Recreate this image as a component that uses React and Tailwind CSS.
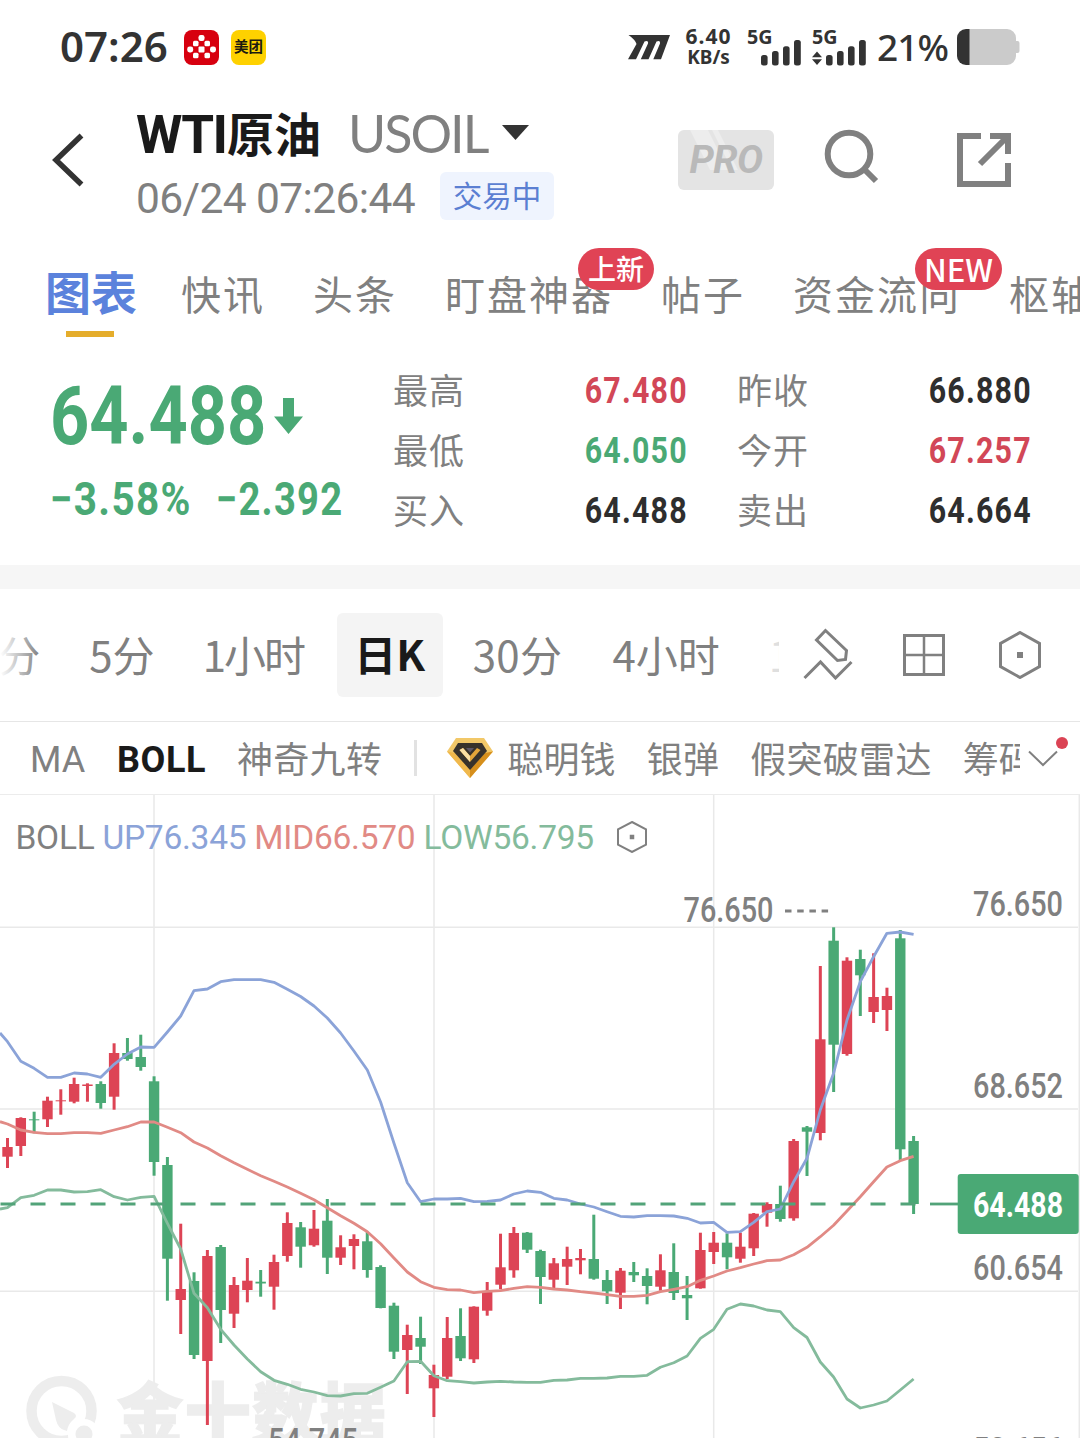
import React from "react";

const RED = "#dd4455";
const GREEN = "#4aa975";

const tabs = [
  { label: "快讯" },
  { label: "头条" },
  { label: "盯盘神器", badge: "上新" },
  { label: "帖子" },
  { label: "资金流向", badge: "NEW" },
  { label: "枢轴点" },
];

const quotes = [
  { label: "最高", value: "67.480", color: "text-[#d24757]" },
  { label: "昨收", value: "66.880", color: "text-[#2e2e2e]" },
  { label: "最低", value: "64.050", color: "text-[#4aa975]" },
  { label: "今开", value: "67.257", color: "text-[#d24757]" },
  { label: "买入", value: "64.488", color: "text-[#2e2e2e]" },
  { label: "卖出", value: "64.664", color: "text-[#2e2e2e]" },
];

const periods = [
  { label: "1分" },
  { label: "5分", className: "ml-px" },
  { label: "1小时", className: "w-[105px] tracking-[-2px]" },
  { label: "日K", active: true },
  { label: "30分", className: "ml-px tracking-[0.4px]" },
  { label: "4小时", className: "ml-[2px]" },
  { label: "15分", className: "ml-px" },
];

// [rising, high, body top, body bottom, low]
const candles = [
  [1, 1138, 1147, 1156.7, 1168],
  [1, 1117.3, 1118, 1146, 1156],
  [0, 1111.7, 1119.3, 1120, 1133.3],
  [1, 1096.7, 1100.7, 1119.3, 1127],
  [1, 1089.3, 1100.3, 1101.3, 1114.7],
  [1, 1077.7, 1084, 1101.7, 1103.3],
  [1, 1083.3, 1084.5, 1086, 1101.7],
  [0, 1081.3, 1084, 1103, 1108.7],
  [1, 1043.3, 1053, 1096.7, 1109.7],
  [0, 1038, 1053, 1059, 1060.7],
  [0, 1034.7, 1057, 1067, 1070.7],
  [0, 1076.3, 1081.3, 1162, 1175.7],
  [0, 1157, 1165, 1258.7, 1300.7],
  [1, 1223.7, 1289, 1300, 1334],
  [0, 1272.3, 1281, 1355, 1359],
  [1, 1250, 1256, 1361, 1425],
  [0, 1245, 1247, 1310, 1343],
  [1, 1277, 1285, 1313.7, 1328],
  [1, 1258, 1280.7, 1290, 1302.3],
  [0, 1270, 1281.7, 1283.5, 1296.7],
  [1, 1254.7, 1262, 1286.7, 1309.7],
  [1, 1212.3, 1223, 1256, 1261.7],
  [0, 1222, 1227.3, 1246.7, 1267.7],
  [1, 1210, 1228.7, 1245.3, 1246.7],
  [0, 1199, 1220.7, 1257.7, 1274],
  [1, 1235.3, 1247.3, 1257.7, 1265],
  [1, 1234.3, 1239, 1246, 1269.3],
  [0, 1231.7, 1241.3, 1270, 1277.7],
  [0, 1265.3, 1267, 1308, 1308.3],
  [0, 1302.7, 1305.7, 1351.7, 1359],
  [1, 1324.7, 1335, 1350, 1394],
  [0, 1316.7, 1338, 1346.7, 1364],
  [1, 1364.7, 1375, 1388.3, 1417],
  [1, 1317, 1338, 1376.7, 1379],
  [0, 1308.3, 1336, 1358.3, 1361],
  [1, 1306.3, 1306.7, 1359.3, 1363],
  [1, 1282, 1291, 1310.7, 1315.7],
  [1, 1233.7, 1267.3, 1284.7, 1289.3],
  [1, 1227, 1233, 1270.3, 1277.7],
  [0, 1232, 1232.7, 1249.7, 1253],
  [0, 1249.7, 1251, 1277, 1304],
  [1, 1258, 1263.3, 1279.7, 1288.7],
  [1, 1246.7, 1259, 1266.7, 1285],
  [1, 1249, 1258, 1260.3, 1274.3],
  [0, 1214.7, 1259, 1278.7, 1279.7],
  [0, 1270, 1280, 1291.3, 1304],
  [1, 1268, 1270.7, 1292.7, 1309],
  [0, 1262, 1272, 1275.3, 1282],
  [0, 1268.3, 1276, 1286, 1304.3],
  [1, 1254.3, 1270.3, 1286.7, 1290.7],
  [0, 1243.3, 1272, 1293, 1300],
  [0, 1276, 1295, 1298.3, 1320],
  [1, 1232.7, 1250, 1288.3, 1288.7],
  [1, 1232, 1242.7, 1252, 1264],
  [0, 1233.3, 1242.7, 1257.3, 1269.3],
  [1, 1232.7, 1246.7, 1258.7, 1262.7],
  [1, 1213, 1213.7, 1248.3, 1256],
  [1, 1202.3, 1204, 1212.7, 1226.7],
  [0, 1185.7, 1204, 1219, 1221.7],
  [1, 1139, 1141, 1218.3, 1220.7],
  [0, 1126, 1127.3, 1131.7, 1176],
  [1, 966, 1039.3, 1133, 1140.3],
  [0, 927.3, 940.7, 1044.7, 1092],
  [1, 957.3, 960.7, 1054, 1055.7],
  [0, 949.7, 959, 975.3, 1016],
  [1, 953.3, 997, 1012, 1023],
  [1, 987.7, 996, 1010, 1031],
  [0, 930, 938.3, 1149.3, 1160.7],
  [0, 1136, 1141, 1204, 1214],
];

// Bollinger bands, one value per candle; the first is the left edge
const upper = [
  1033, 1041.7, 1061.3, 1068.3, 1077.3, 1077.3, 1073, 1074, 1077.3, 1064.3, 1054, 1047, 1047.3, 1032, 1016,
  990.7, 989, 981.7, 979.7, 979.7, 979.7, 982.3, 989.3, 996.5, 1006, 1018, 1033, 1051, 1070, 1102, 1143,
  1182.7, 1201.7, 1199, 1199, 1198.3, 1201.7, 1201.3, 1200, 1194, 1191, 1192.3, 1198.3, 1200, 1204, 1207,
  1211.7, 1216.3, 1217, 1215.7, 1215.7, 1216, 1218.3, 1223, 1222.3, 1232.3, 1231.7, 1222.3, 1211.7, 1209,
  1181.7, 1158.3, 1110, 1073.3, 1020, 981.7, 956.7, 933.3, 932, 934.3,
];
const middle = [
  1121.7, 1124, 1130, 1132.3, 1133.7, 1133.7, 1132.7, 1132.7, 1133.3, 1130, 1126.7, 1122, 1122, 1127.3, 1132.7,
  1142, 1148, 1155.7, 1162.7, 1169.3, 1175.7, 1181.3, 1187, 1193.3, 1199.7, 1207.7, 1215.7, 1223.3, 1231.7,
  1243.7, 1258, 1272, 1281.7, 1287.3, 1289.7, 1290, 1292.7, 1291.3, 1290.7, 1288.3, 1286.7, 1287.3, 1289, 1290,
  1291.7, 1293, 1294.7, 1296.3, 1296.3, 1295.3, 1291.7, 1289.3, 1286.7, 1280.3, 1276, 1271, 1267.7, 1264,
  1260.7, 1260, 1254.7, 1247.3, 1236.7, 1225.3, 1211, 1196.7, 1181.7, 1167, 1160.7, 1156.3,
];
const lower = [
  1209, 1207.7, 1197.7, 1195.3, 1190, 1190, 1192, 1191.7, 1189.7, 1196.7, 1200, 1197.3, 1196.3, 1223.3, 1249,
  1293.3, 1307.7, 1329.3, 1345, 1359, 1371.7, 1380.3, 1384.3, 1389.3, 1392, 1395.7, 1396, 1393.7, 1393.3,
  1387.3, 1381, 1361.7, 1361.3, 1375.7, 1380.7, 1381.7, 1383, 1382, 1381.3, 1382, 1382.3, 1382.3, 1380.3, 1380,
  1378.3, 1378.3, 1378, 1376.3, 1376.3, 1375.3, 1367.3, 1362.7, 1356, 1338.3, 1329.3, 1309.3, 1304, 1306,
  1310, 1311.7, 1327.7, 1337.5, 1362, 1377, 1399, 1408, 1405, 1401, 1390, 1379,
];

const candleX = (i) => 7.5 + i * 13.325;
const bandPoints = (values) =>
  values.map((y, i) => `${i === 0 ? 0 : candleX(i - 1).toFixed(1)},${y}`).join(" ");

const SignalBars = ({ active }) => (
  <svg width="56" height="44" viewBox="0 -4 56 44" fill="#333">
    <text x="1" y="16.500" fontFamily="Noto Sans" fontWeight="700" fontSize="19" textLength="25.500" lengthAdjust="spacingAndGlyphs">5G</text>
    {active && <path d="M6 24.500l5 5.800H1zM6 38l5-5.800H1z" />}
    <rect x="15" y="28" width="6.600" height="10.500" rx="2.500" />
    <rect x="26" y="24" width="6.600" height="14.500" rx="2.500" />
    <rect x="37" y="19.300" width="6.600" height="19.200" rx="2.500" />
    <rect x="48" y="13" width="6.800" height="25.500" rx="2.500" />
  </svg>
);

const StatusBar = () => (
  <div className="h-[94px] shrink-0 flex items-center pl-[60px] pr-[60px] text-[#333] font-['Noto_Sans']">
    <div className="w-[124px] -mt-[2px] text-[42px] leading-none font-semibold">07:26</div>
    <svg width="35" height="35" viewBox="0 0 35 35">
      <rect width="35" height="35" rx="8" fill="#d7000f" />
      <g fill="#fff">
        <rect x="14.500" y="5" width="6" height="6" rx="2.200" />
        <rect x="9" y="10.800" width="5.500" height="5.500" rx="1.500" />
        <rect x="20.500" y="10.800" width="5.500" height="5.500" rx="1.500" />
        <rect x="3.200" y="16.500" width="6" height="6" rx="2.400" />
        <rect x="14.500" y="16.500" width="6" height="6" rx="1" />
        <rect x="26" y="16.500" width="6" height="6" rx="2.400" />
        <rect x="9" y="22.800" width="5.500" height="5.500" rx="1.500" />
        <rect x="20.500" y="22.800" width="5.500" height="5.500" rx="1.500" />
      </g>
    </svg>
    <div className="ml-3 w-[35px] h-[35px] rounded-lg bg-[#fed100] flex items-center justify-center text-[14.5px] leading-none font-bold text-[#1c1a10] font-['Noto_Sans_CJK_SC',sans-serif]">
      <span className="-mt-[2px]">美团</span>
    </div>

    <div className="ml-auto flex items-center">
      <svg width="42" height="25" viewBox="0 0 42 25" fill="#333">
        <path d="M0.500 0H42L33 24.300H25.300L32 8.500Q32.500 6 30.800 6L28.500 6.500L20.500 24.300H12.800L20 8.500Q20.500 6 18.500 6L16.500 6.500L8 24.300H0L8.500 9Q7 4.500 0.500 0Z" />
      </svg>
      <div className="ml-[13px] w-[51px] text-center text-[21px] leading-[21.5px] font-bold">
        <div className="tracking-[1px]">6.40</div>
        <div className="text-[19px]">KB/s</div>
      </div>
      <div className="ml-[12px] -mt-[4px]"><SignalBars /></div>
      <div className="ml-[9px] -mt-[4px]"><SignalBars active /></div>
      <div className="ml-[10px] -mt-[2px] w-[80px] text-[37px] leading-none font-medium tracking-[-0.9px]">21%</div>
      <svg width="63" height="37" viewBox="0 0 63 37">
        <path d="M10 0H50a9 9 0 0 1 9 9v3h1.500a2 2 0 0 1 2 2v8a2 2 0 0 1-2 2H59v3a9 9 0 0 1-9 9H10z" fill="#cbcbcb" />
        <path d="M12.500 0H9a9 9 0 0 0-9 9v18a9 9 0 0 0 9 9h3.500z" fill="#333" />
      </svg>
    </div>
  </div>
);

const Header = () => (
  <div className="h-[146px] shrink-0 flex items-start">
    <svg className="ml-[50px] mt-[38px]" width="36" height="56" viewBox="0 0 36 56" fill="none" stroke="#333" strokeWidth="5.500">
      <path d="M31.500 3.500L6 28l25.500 24.500" />
    </svg>

    <div className="ml-[50px] mt-[14px] w-[542px]">
      <div className="h-[52px] flex items-center leading-none whitespace-nowrap">
        <span className="w-[91px] mt-[2px] text-[53px] font-bold text-[#1a1a1a] font-['Roboto'] tracking-[-1.5px]">WTI</span>
        <span className="-mt-[5px] w-[121px] text-[47px] font-bold text-[#1a1a1a] font-['Noto_Sans_CJK_SC',sans-serif]">原油</span>
        <span className="-mt-[2px] w-[154px] text-[52px] text-[#808080] font-['Lato'] tracking-[-2px]">USOIL</span>
        <svg className="-mt-1" width="27" height="15" viewBox="0 0 27 15" fill="#333"><path d="M0 0h27L13.500 15z" /></svg>
      </div>
      <div className="mt-[12px] h-[48px] flex items-center leading-none whitespace-nowrap">
        <span className="mt-[6px] w-[304px] text-[42.500px] text-[#808080] font-['Roboto'] tracking-[-0.6px]">06/24 07:26:44</span>
        <span className="w-[114px] h-[48px] pb-[2px] rounded-md bg-[#eff4fe] flex items-center justify-center text-[29.5px] text-[#5b7fd2] font-['Noto_Sans_CJK_SC',sans-serif]">
          交易中
        </span>
      </div>
    </div>

    <div className="relative mt-[36px] w-[96px] h-[60px] rounded-md bg-[#e4e4e4] overflow-hidden flex items-center justify-center">
      <svg className="absolute inset-0" width="96" height="60">
        <path d="M12 0H30L50 40H32zM34 0h6l20 40h-6z" fill="#ededed" />
      </svg>
      <span className="relative text-[39px] leading-none font-bold italic text-[#b9b9b9] font-['Roboto'] tracking-[-0.5px]">PRO</span>
    </div>
    <svg className="ml-[49px] mt-[35px]" width="58" height="58" viewBox="0 0 58 58" fill="none" stroke="#808080" strokeWidth="6">
      <circle cx="26" cy="25" r="21.300" />
      <path d="M40 39L53 52" />
    </svg>
    <svg className="ml-[76px] mt-[39px]" width="54" height="54" viewBox="0 0 54 54" fill="none" stroke="#808080" strokeWidth="6">
      <path d="M24 3H3v48h48V30" />
      <path d="M33 3h18v18M51 3L23 31" />
    </svg>
  </div>
);

const Tabs = () => (
  <div className="h-[110px] shrink-0 flex items-start gap-12 pl-[45px] overflow-hidden whitespace-nowrap font-['Noto_Sans_CJK_SC',sans-serif]">
    <div className="-mr-[3px] shrink-0 flex flex-col items-center">
      <span className="mt-[20px] h-[60px] text-[46px] leading-[60px] font-bold text-[#5b82dc]">图表</span>
      <span className="mt-[11px] -ml-[2px] w-12 h-1.5 bg-[#e5ad2b]" />
    </div>
    {tabs.map((tab) => (
      <div key={tab.label} className="relative mt-[23px] -left-px shrink-0 text-[40px] leading-[60px] tracking-[2px] text-[#808080]">
        {tab.label}
        {tab.badge && (
          <span
            className={`absolute -top-[15px] h-[42px] pb-0.5 rounded-full bg-[#e04355] text-white flex items-center justify-center font-medium tracking-normal leading-none ${
              tab.badge === "NEW" ? "left-[122px] w-[87px] text-[31px]" : "left-[133px] w-[76px] text-[28px]"
            }`}
          >
            {tab.badge}
          </span>
        )}
      </div>
    ))}
  </div>
);

const Quote = () => (
  <div className="h-[215px] shrink-0 flex font-['Roboto'] leading-none whitespace-nowrap">
    <div className="w-[393px] pl-[50px] text-[#4aa975] font-bold">
      <div className="mt-[25px] h-[82px] flex items-center">
        <div className="w-[224px]">
          <span className="inline-block origin-left scale-x-[0.835] text-[82px]">64.488</span>
        </div>
        <svg width="29" height="36" viewBox="0 0 29 36" fill={GREEN}><path d="M9 0h11v18.500h9L14.500 36 0 18.500h9z" /></svg>
      </div>
      <div className="mt-[19px] h-[46px] flex items-center text-[46px]">
        <div className="w-[166px]">
          <span className="inline-block origin-left scale-x-[0.88] tracking-[1.5px]">−3.58%</span>
        </div>
        <div>
          <span className="inline-block origin-left scale-x-[0.83] tracking-[1.5px]">−2.392</span>
        </div>
      </div>
    </div>
    <div className="mt-[10px] h-[180px] grid grid-cols-[294px_294px] gap-x-[50px]">
      {quotes.map((q) => (
        <div key={q.label} className="h-[60px] flex items-center justify-between">
          <span className="-mt-1 text-[35px] tracking-[1px] text-[#808080] font-['Noto_Sans_CJK_SC',sans-serif]">{q.label}</span>
          <span className={`inline-block origin-right scale-x-[0.82] text-[37px] font-bold tracking-[1.500px] -mr-px ${q.color}`}>{q.value}</span>
        </div>
      ))}
    </div>
  </div>
);

const HexIcon = ({ width, height, stroke, dot }) => (
  <svg width={width} height={height} viewBox={`0 0 ${width} ${height}`} fill="none" stroke="#808080" strokeWidth={stroke}>
    <path d={`M${width / 2} ${stroke / 2}L${width - stroke / 2} ${height * 0.26}V${height * 0.74}L${width / 2} ${height - stroke / 2}L${stroke / 2} ${height * 0.74}V${height * 0.26}Z`} />
    <rect x={(width - dot) / 2} y={(height - dot) / 2} width={dot} height={dot} fill="#808080" stroke="none" />
  </svg>
);

const PeriodBar = () => (
  <div className="h-[133px] shrink-0 flex items-center border-b border-[#e6e6e6]">
    <div className="relative w-[779px] overflow-hidden">
      <div className="-ml-[25px] w-[1000px] h-[84px] flex items-center gap-12 text-[42px] leading-none text-[#808080] whitespace-nowrap font-['Noto_Sans_CJK_SC',sans-serif]">
        {periods.map((p) =>
          p.active ? (
            <span key={p.label} className="-mx-[19px] w-[106px] h-[84px] pb-1 rounded-md bg-[#f4f4f4] flex items-center justify-center font-bold text-[#1a1a1a]">
              {p.label}
            </span>
          ) : (
            <span key={p.label} className={`shrink-0 -mt-[3px] ${p.className || ""}`}>{p.label}</span>
          )
        )}
      </div>
      <div className="absolute inset-y-0 left-0 w-10 bg-gradient-to-r from-white to-transparent" />
      <div className="absolute inset-y-0 right-0 w-8 bg-white/75" />
    </div>
    <svg className="ml-[24px] -mt-0.5" width="50" height="52" viewBox="0 0 50 52" fill="none" stroke="#808080" strokeWidth="3">
      <path d="M22.500 2.500L13.500 12 34.500 32.500 42.500 31.500 43.500 22.500Z" />
      <path d="M1.500 50L17.500 34 32.500 50 48.500 34" />
    </svg>
    <svg className="ml-[50px]" width="42" height="42" viewBox="0 0 42 42" fill="none" stroke="#808080">
      <rect x="1.500" y="1.500" width="39" height="39" strokeWidth="3" />
      <path d="M21 1v40M1 21h40" strokeWidth="2.500" />
    </svg>
    <div className="ml-[54px]"><HexIcon width={42} height={48} stroke={3} dot={6} /></div>
  </div>
);

const IndicatorBar = () => (
  <div className="relative h-[73px] shrink-0 flex items-center border-b border-[#ececec] text-[36px] leading-none text-[#808080] whitespace-nowrap overflow-hidden font-['Noto_Sans_CJK_SC',sans-serif]">
    <span className="mt-[4px] ml-[30px] w-[87px] font-['Roboto']">MA</span>
    <span className="mt-[4px] w-[120px] font-['Roboto'] font-bold text-[#1a1a1a] tracking-[0.6px]">BOLL</span>
    <span className="-mt-[3px] tracking-[0.3px]">神奇九转</span>
    <span className="ml-[32px] w-[3px] h-9 bg-[#e2e2e2]" />
    <svg className="ml-[30px] shrink-0" width="46" height="40" viewBox="0 0 46 40">
      <path d="M9 0H37L46 13.500 23 40 0 13.500Z" fill="#f2c868" />
      <path d="M46 13.500L23 40V31L38 15z" fill="#d68f1c" />
      <path d="M0 13.500L23 40V31L8 15z" fill="#f0b84c" />
      <path d="M11 5H35L40 13 23 32 6 13Z" fill="#37322b" />
      <path d="M12.500 12L16 10 23 18 30 10 33.500 12 23 24Z" fill="#e3a53a" />
      <path d="M12.500 12L16 10 23 18V24Z" fill="#f9dfa4" />
      <path d="M19 10h8l-4 4.500z" fill="#5b5566" />
    </svg>
    <span className="-mt-[3px] ml-[14px] tracking-[0.2px]">聪明钱</span>
    <span className="-mt-[3px] ml-[31px] tracking-[0.2px]">银弹</span>
    <span className="-mt-[3px] ml-[31px] tracking-[0.3px]">假突破雷达</span>
    <span className="-mt-[3px] ml-[31px] w-[57px] overflow-hidden py-2">筹码</span>
    <svg className="ml-[8px] shrink-0" width="30" height="17" viewBox="0 0 30 17" fill="none" stroke="#808080" strokeWidth="2">
      <path d="M1 1.500l14 13.500 14-13.500" />
    </svg>
    <span className="absolute left-[1056px] top-[15px] w-3 h-3 rounded-full bg-[#db4354]" />
  </div>
);

const AxisText = ({ x, y, width = 90, fill = "#808080", weight = 500, children }) => (
  <text x={x} y={y} fill={fill} fontFamily="Roboto" fontWeight={weight} fontSize="35" textLength={width} lengthAdjust="spacingAndGlyphs">
    {children}
  </text>
);

const Chart = () => (
  <div className="relative h-[643px] shrink-0 overflow-hidden">
    <svg className="block" width="1080" height="643" viewBox="0 795 1080 643">
      <g stroke="#e9e9e9" strokeWidth="1.500">
        {[154, 434, 713.7, 1079.3].map((x) => (
          <line key={x} x1={x} x2={x} y1="795" y2="1438" />
        ))}
        {[927.3, 1109, 1291.3].map((y) => (
          <line key={y} x1="0" x2="1078" y1={y} y2={y} />
        ))}
      </g>

      {/* watermark */}
      <g fill="#ededed">
        <circle cx="61.500" cy="1411" r="30" fill="none" stroke="#ededed" strokeWidth="10.500" />
        <circle cx="84" cy="1435" r="16" fill="#fff" />
        <path d="M52 1402L74 1413Q78 1416 74 1419Q68 1424 67 1431L64 1430Q58 1428 56 1420Z" />
        <circle cx="84" cy="1434" r="8.500" />
        <text x="117" y="1438" fontFamily="Noto Sans CJK SC" fontWeight="900" fontSize="66" textLength="269" stroke="#ededed" strokeWidth="1.500">金十数据</text>
      </g>

      {candles.map(([rising, high, top, bottom, low], i) => {
        const x = candleX(i);
        return (
          <g key={i} fill={rising ? RED : GREEN}>
            <rect x={x - 1.5} y={high} width="3" height={low - high} />
            <rect x={x - 5.2} y={top} width="10.400" height={Math.max(bottom - top, 1)} />
          </g>
        );
      })}

      <g fill="none" strokeWidth="2.800" strokeLinejoin="round">
        <polyline points={bandPoints(upper)} stroke="#8ba3d8" />
        <polyline points={bandPoints(middle)} stroke="#e18a85" />
        <polyline points={bandPoints(lower)} stroke="#84bb9c" />
      </g>

      {/* last price */}
      <line x1="0.500" x2="930" y1="1204" y2="1204" stroke="#52a379" strokeWidth="2.800" strokeDasharray="15 15" />
      <line x1="930" x2="958" y1="1204" y2="1204" stroke="#52a379" strokeWidth="2.800" />
      <rect x="957.700" y="1174" width="121" height="60" rx="3" fill={GREEN} />
      <AxisText x={973} y={1216.5} fill="#fff" weight={700}>64.488</AxisText>

      <AxisText x={973} y={916}>76.650</AxisText>
      <AxisText x={973} y={1098}>68.652</AxisText>
      <AxisText x={973} y={1280}>60.654</AxisText>
      <AxisText x={973} y={1462}>52.656</AxisText>

      <AxisText x={683.5} y={922}>76.650</AxisText>
      <line x1="785" x2="828.500" y1="911" y2="911" stroke="#808080" strokeWidth="2.800" strokeDasharray="6.500 5.700" />
      <AxisText x={268} y={1453}>54.745</AxisText>
    </svg>

    <div className="absolute left-[15.5px] top-[23px] h-[40px] flex items-center gap-2 text-[33.5px] leading-none whitespace-nowrap tracking-[-0.25px] font-['Roboto']">
      <span className="text-[#808080]">BOLL</span>
      <span className="text-[#8ba3d8]">UP76.345</span>
      <span className="text-[#e18a85]">MID66.570</span>
      <span className="text-[#84bb9c]">LOW56.795</span>
      <span className="-mt-0.5 ml-[15px]"><HexIcon width={30} height={32} stroke={2} dot={4.5} /></span>
    </div>
  </div>
);

export default function App() {
  return (
    <div className="w-[1080px] h-[1438px] overflow-hidden bg-white flex flex-col">
      <StatusBar />
      <Header />
      <Tabs />
      <Quote />
      <div className="h-6 shrink-0 bg-[#f6f6f6]" />
      <PeriodBar />
      <IndicatorBar />
      <Chart />
    </div>
  );
}
